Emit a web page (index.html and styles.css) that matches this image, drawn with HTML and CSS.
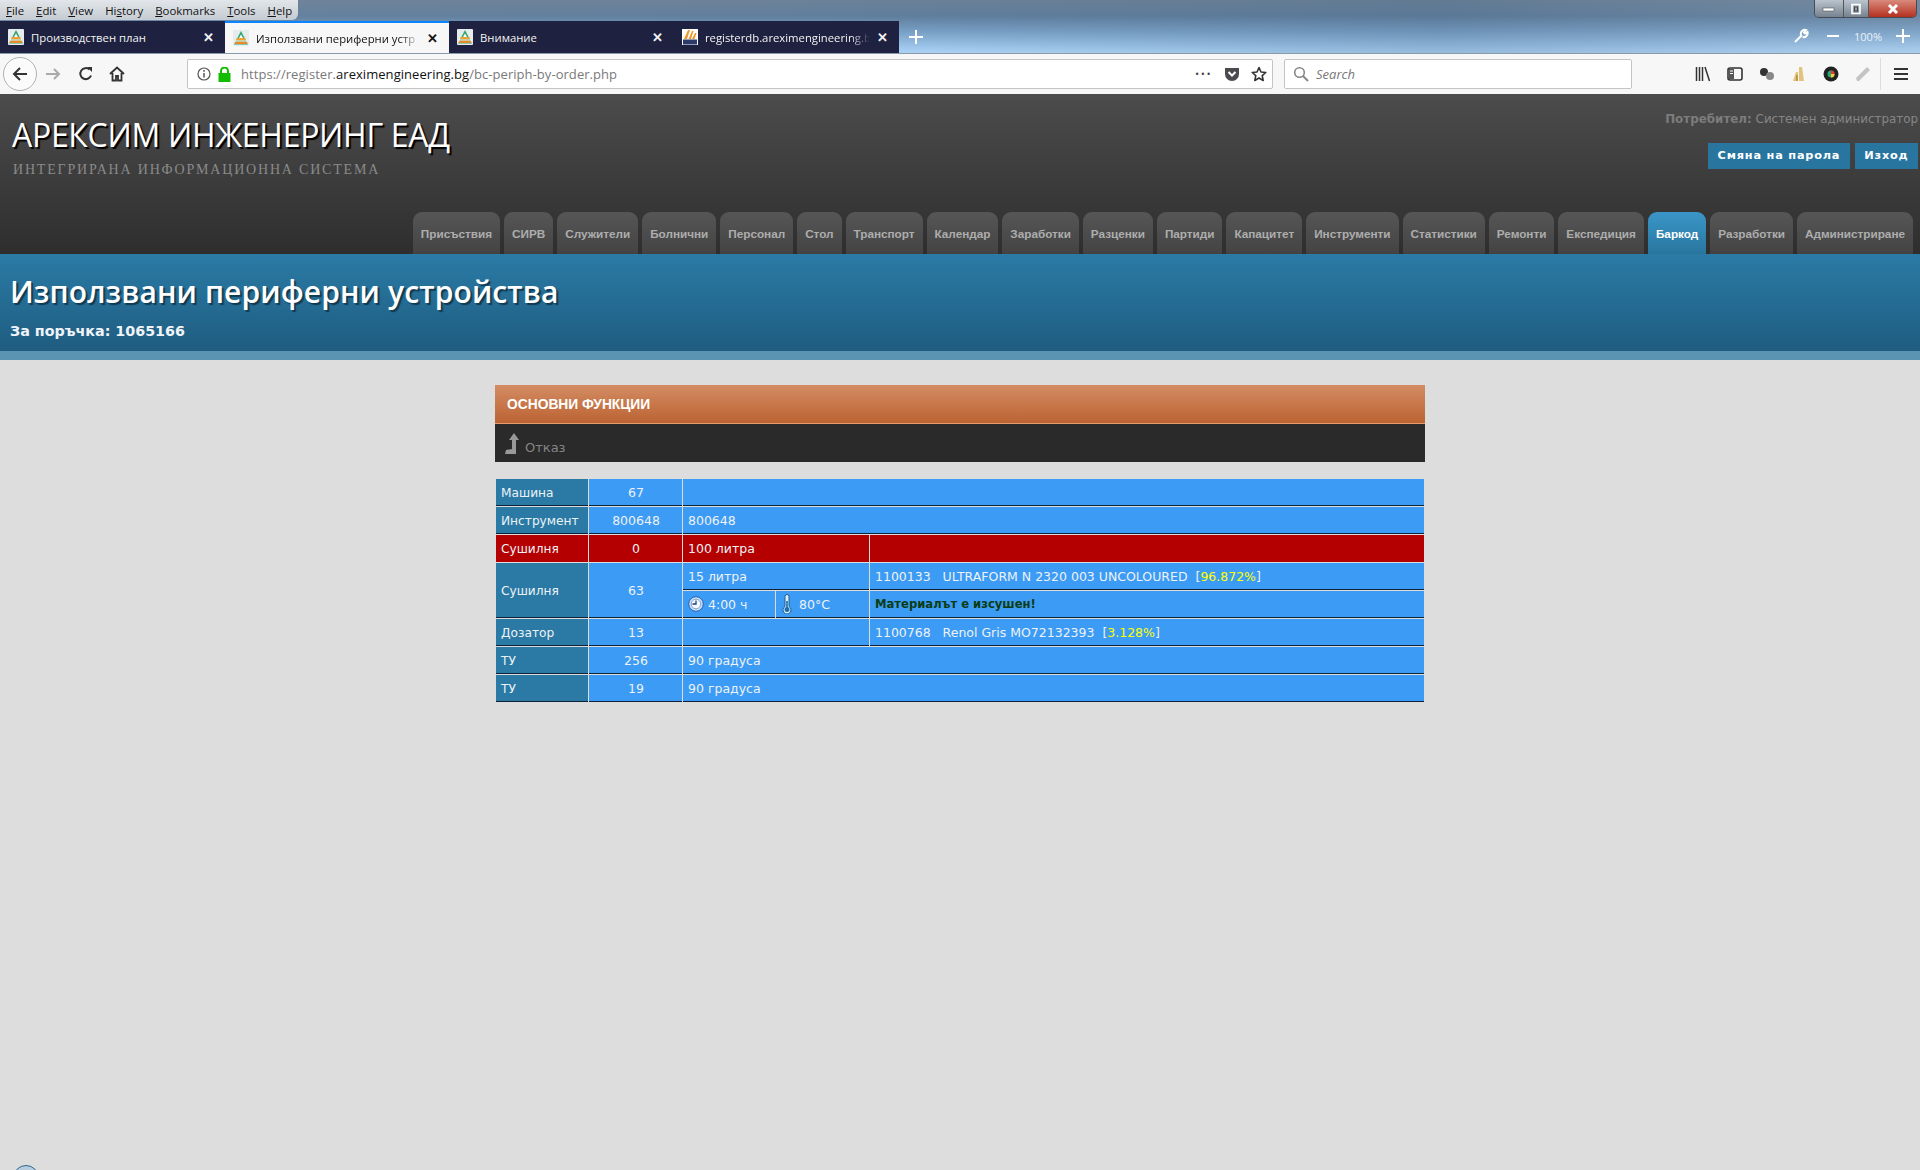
FILE: index.html
```html
<!DOCTYPE html>
<html lang="bg">
  <head>
    <meta charset="UTF-8" />
    <title>Използвани периферни устройства</title>
    <link rel="stylesheet" href="styles.css">
  </head>
  <body>
    <svg class="defs" width="0" height="0">
      <symbol id="fav" viewBox="0 0 16 16">
        <rect width="16" height="16" rx="1" fill="#e6ecee"/>
        <path d="M8 1 15 14.500H1Z" fill="#2fa56c"/>
        <path d="M8 4.500 10 8H6Z" fill="#fff"/>
        <rect x="3.500" y="8" width="9" height="2.500" fill="#f0a030"/>
        <rect x="2" y="10.500" width="12" height="1.200" fill="#fff"/>
        <rect x="2" y="11.700" width="12" height="2.300" fill="#e88a2a"/>
      </symbol>
    </svg>

    <div class="glass">
      <div class="menubar">
        <span><u>F</u>ile</span><span><u>E</u>dit</span><span><u>V</u>iew</span><span>Hi<u>s</u>tory</span><span><u>B</u>ookmarks</span><span><u>T</u>ools</span><span><u>H</u>elp</span>
      </div>
      <div class="wincontrols">
        <span class="winbtn"><svg width="14" height="8" viewBox="0 0 14 8"><rect x="1" y="3" width="11" height="3" fill="#fff" stroke="#555" stroke-width=".6"/></svg></span>
        <span class="winbtn restore"><svg width="12" height="12" viewBox="0 0 12 12"><rect x="2" y="1.500" width="8" height="9" fill="none" stroke="#fff" stroke-width="1.600"/><rect x="4.500" y="4" width="3" height="4" fill="none" stroke="#444" stroke-width="1"/></svg></span>
        <span class="winbtn close"><svg width="14" height="12" viewBox="0 0 14 12"><path d="M3 2 11 10M11 2 3 10" stroke="#fff" stroke-width="3"/></svg></span>
      </div>
      <div class="tabstrip">
        <div class="btab"><svg class="favicon"><use href="#fav"/></svg><span class="btab-label plain">Производствен план</span><span class="btab-x">✕</span></div>
        <div class="btab active"><svg class="favicon"><use href="#fav"/></svg><span class="btab-label">Използвани периферни устр</span><span class="btab-x">✕</span></div>
        <div class="btab"><svg class="favicon"><use href="#fav"/></svg><span class="btab-label plain">Внимание</span><span class="btab-x">✕</span></div>
        <div class="btab last">
          <svg class="favicon" viewBox="0 0 16 16"><rect width="16" height="16" fill="#fff"/><path d="M2 10 6 1h2L5 10ZM6.500 10 10 2h1.500L9 10ZM10 10l3-6h1.500L12.500 10Z" fill="#ee9a2a"/><rect x="1" y="10.500" width="14" height="5" fill="#2b3a6a"/></svg>
          <span class="btab-label">registerdb.areximengineering.b</span><span class="btab-x">✕</span>
        </div>
        <svg class="newtab" width="16" height="16" viewBox="0 0 16 16"><path d="M8 1v14M1 8h14" stroke="#fff" stroke-width="2"/></svg>
        <div class="zoomctl">
          <svg width="16" height="16" viewBox="0 0 16 16"><path d="M2 14 9 7M8 7a4 4 0 0 1 5-5L11 4.500l1 1L14.500 4a4 4 0 0 1-5 5" fill="none" stroke="#fff" stroke-width="2"/></svg>
          <svg class="zoom-minus" width="14" height="14" viewBox="0 0 14 14"><path d="M1 7h12" stroke="#fff" stroke-width="2"/></svg>
          <span class="zoom-val">100%</span>
          <svg width="14" height="14" viewBox="0 0 14 14"><path d="M7 0v14M0 7h14" stroke="#fff" stroke-width="2"/></svg>
        </div>
      </div>
    </div>

    <div class="toolbar">
      <span class="backbtn"><svg width="18" height="18" viewBox="0 0 18 18"><path d="M16 9H3M9 3 3 9l6 6" fill="none" stroke="#333" stroke-width="2"/></svg></span>
      <svg class="tool fwd" width="16" height="16" viewBox="0 0 16 16"><path d="M1 8h13M9 3l5 5-5 5" fill="none" stroke="#aaa" stroke-width="2"/></svg>
      <svg class="tool reload" width="16" height="16" viewBox="0 0 16 16"><path d="M13 9.500A5.500 5.500 0 1 1 11.500 3.500" fill="none" stroke="#333" stroke-width="2"/><path d="M9 1h5v5Z" fill="#333"/></svg>
      <svg class="tool home" width="16" height="16" viewBox="0 0 16 16"><path d="M1 8 8 1.500 15 8M3.500 7v7.500h3.500V10h2v4.500h3.500V7" fill="none" stroke="#333" stroke-width="1.800"/></svg>

      <div class="urlbar">
        <svg width="14" height="14" viewBox="0 0 14 14"><circle cx="7" cy="7" r="6" fill="none" stroke="#555" stroke-width="1.200"/><path d="M7 6v4.500M7 3v1.800" stroke="#555" stroke-width="1.500"/></svg>
        <svg class="lock" width="13" height="15" viewBox="0 0 13 15"><rect x="0.500" y="6" width="12" height="9" fill="#12bc00"/><path d="M3 6V4a3.500 3.500 0 0 1 7 0v2" fill="none" stroke="#12bc00" stroke-width="2"/></svg>
        <span class="url">https://register.<b>areximengineering.bg</b>/bc-periph-by-order.php</span>
        <span class="url-dots">•••</span>
        <svg class="pocket" width="16" height="15" viewBox="0 0 16 15"><path d="M1 1h14v6a7 7 0 0 1-14 0Z" fill="#4a4a4f"/><path d="M4.500 5 8 8.500 11.500 5" fill="none" stroke="#fff" stroke-width="2"/></svg>
        <svg class="star" width="16" height="16" viewBox="0 0 16 16"><path d="M8 1.500 10 6l4.800.5-3.600 3.200 1 4.800L8 12l-4.200 2.500 1-4.800L1.200 6.500 6 6Z" fill="none" stroke="#333" stroke-width="1.600" stroke-linejoin="round"/></svg>
      </div>

      <div class="searchbar">
        <svg width="16" height="16" viewBox="0 0 16 16"><circle cx="6.500" cy="6.500" r="4.800" fill="none" stroke="#888" stroke-width="1.600"/><path d="m10 10 5 5" stroke="#888" stroke-width="2"/></svg>
        <span>Search</span>
      </div>

      <div class="addons">
        <svg width="16" height="16" viewBox="0 0 16 16"><path d="M1.500 1v14M4.500 1v14M7.500 1v14M10 1l4.500 14" stroke="#333" stroke-width="1.500" fill="none"/></svg>
        <svg width="16" height="16" viewBox="0 0 16 16"><rect x="1" y="2" width="14" height="12" rx="2" fill="none" stroke="#333" stroke-width="1.600"/><rect x="2" y="3" width="5" height="10" fill="#555"/><path d="M3 5h3M3 7.500h3" stroke="#fff"/></svg>
        <svg width="16" height="16" viewBox="0 0 16 16"><circle cx="5" cy="6" r="4" fill="#333"/><circle cx="11" cy="10" r="4" fill="#888"/></svg>
        <svg width="16" height="16" viewBox="0 0 16 16"><path d="M2 15 5 6h2v9ZM8 15V1h3l2 14Z" fill="#e3c27a"/><path d="M5 15V9h2v6Z" fill="#b99a50"/></svg>
        <svg width="16" height="16" viewBox="0 0 16 16"><circle cx="8" cy="8" r="7.500" fill="#222"/><circle cx="8" cy="8" r="3.500" fill="#2a7"/><path d="M8 4.500a3.500 3.500 0 0 1 3.500 3.500H8Z" fill="#e33"/><path d="M8 8h3.500A3.500 3.500 0 0 1 8 11.500Z" fill="#fc3"/></svg>
        <svg width="16" height="16" viewBox="0 0 16 16"><path d="M2 15 1 12 12 1l3 3L4 15Z" fill="#c4c4c4"/></svg>
      </div>
      <span class="tool-sep"></span>
      <svg class="hamburger" width="14" height="12" viewBox="0 0 14 12"><path d="M0 1h14M0 6h14M0 11h14" stroke="#333" stroke-width="2"/></svg>
    </div>

    <header class="site-header">
      <div class="header-top">
        <div class="brand">
          <h1>АРЕКСИМ ИНЖЕНЕРИНГ ЕАД</h1>
          <p>ИНТЕГРИРАНА ИНФОРМАЦИОННА СИСТЕМА</p>
        </div>
        <div class="userbox">
          <p class="username"><strong>Потребител:</strong> Системен администратор</p>
          <div class="userlinks"><a>Смяна на парола</a><a>Изход</a></div>
        </div>
      </div>
      <nav class="mainnav">
        <a>Присъствия</a><a>СИРВ</a><a>Служители</a><a>Болнични</a><a>Персонал</a><a>Стол</a><a>Транспорт</a><a>Календар</a><a>Заработки</a><a>Разценки</a><a>Партиди</a><a>Капацитет</a><a>Инструменти</a><a>Статистики</a><a>Ремонти</a><a>Експедиция</a><a class="current">Баркод</a><a>Разработки</a><a>Администриране</a>
      </nav>
    </header>

    <section class="pagetitle">
      <h2>Използвани периферни устройства</h2>
      <p>За поръчка: 1065166</p>
    </section>

    <main class="content">
      <div class="panel-title">ОСНОВНИ ФУНКЦИИ</div>
      <div class="panel-body">
        <svg width="16" height="22" viewBox="0 0 16 22"><path d="M9 0 14 7H11V21H0L1 17 7 16V7H4Z" fill="#999"/></svg>
        <span>Отказ</span>
      </div>

      <table class="periph">
        <colgroup><col class="c1"><col class="c2"><col class="c3"><col class="c4"><col></colgroup>
        <tr><th>Машина</th><td class="num">67</td><td colspan="3"></td></tr>
        <tr><th>Инструмент</th><td class="num">800648</td><td colspan="3">800648</td></tr>
        <tr class="alarm"><th>Сушилня</th><td class="num">0</td><td colspan="2">100 литра</td><td></td></tr>
        <tr><th rowspan="2">Сушилня</th><td class="num" rowspan="2">63</td><td colspan="2">15 литра</td><td>1100133 &nbsp; ULTRAFORM N 2320 003 UNCOLOURED &nbsp;[<span class="pct">96.872%</span>]</td></tr>
        <tr>
          <td><svg class="cell-icon" width="16" height="16" viewBox="0 0 16 16"><circle cx="8" cy="8" r="7.300" fill="#c9dcf7" stroke="#2b5fa8"/><circle cx="8" cy="8" r="4.800" fill="#f4f8fe" stroke="#7fa5da"/><path d="M8 4.500V8H4.500" fill="none" stroke="#1d3f7a" stroke-width="1.300"/></svg>4:00 ч</td>
          <td><svg class="cell-icon thermo" width="10" height="20" viewBox="0 0 10 20"><path d="M3 2.500a2 2 0 0 1 4 0v10a4 4 0 1 1-4 0Z" fill="#dcefff" stroke="#1d5f8f"/><circle cx="5" cy="15.500" r="2.500" fill="#1d6fb0"/><rect x="4.200" y="7" width="1.600" height="8" fill="#1d6fb0"/></svg>80°C</td>
          <td class="dried">Материалът е изсушен!</td>
        </tr>
        <tr><th>Дозатор</th><td class="num">13</td><td colspan="2"></td><td>1100768 &nbsp; Renol Gris MO72132393 &nbsp;[<span class="pct">3.128%</span>]</td></tr>
        <tr><th>ТУ</th><td class="num">256</td><td colspan="3">90 градуса</td></tr>
        <tr><th>ТУ</th><td class="num">19</td><td colspan="3">90 градуса</td></tr>
      </table>
    </main>

    <span class="corner-badge"></span>
  </body>
</html>
```

FILE: styles.css
```css
html, body {
  margin: 0;
  padding: 0;
  height: 1170px;
  overflow: hidden;
}

body {
  position: relative;
  background-color: #dddddd;
  font-family: "DejaVu Sans", sans-serif;
}

.defs {
  position: absolute;
}

/* browser chrome */
.glass {
  position: relative;
  height: 53px;
  background:
    linear-gradient(90deg, rgba(120, 140, 160, 0.25), rgba(90, 120, 160, 0) 40%, rgba(70, 100, 130, 0.25) 75%, rgba(150, 170, 190, 0.2)),
    linear-gradient(180deg, #6d8298 0%, #617f9e 30%, #7ba3c9 60%, #a7d0f4 92%, #b3d8f8 100%);
}

.menubar {
  display: flex;
  gap: 12px;
  width: 292px;
  height: 20px;
  padding-left: 6px;
  align-items: center;
  background: linear-gradient(180deg, #e2e6ea, #c4cbd2);
  border-radius: 0 0 6px 0;
  font-family: "Open Sans", sans-serif;
  font-size: 11.4px;
  color: #111;
}

.wincontrols {
  position: absolute;
  top: 0;
  right: 3px;
  display: flex;
  height: 17px;
  border: 1px solid #444c55;
  border-top: none;
  border-radius: 0 0 5px 5px;
  overflow: hidden;
}

.winbtn {
  display: flex;
  align-items: center;
  justify-content: center;
  width: 28px;
  background: linear-gradient(180deg, #b9c4cf, #76828e);
  border-right: 1px solid #555;
}

.winbtn.restore {
  width: 24px;
}

.winbtn.close {
  width: 47px;
  border-right: none;
  background: linear-gradient(180deg, #d98a7c, #b4301f);
}

.tabstrip {
  display: flex;
  align-items: stretch;
  height: 32px;
  margin-top: 1px;
}

.btab {
  display: flex;
  align-items: center;
  gap: 7px;
  box-sizing: border-box;
  width: 225px;
  padding: 0 11px 0 8px;
  background-color: #1e2240;
  color: #f2f2f2;
  font-family: "Open Sans", sans-serif;
  font-size: 11.3px;
}

.btab.active {
  width: 224px;
  background-color: #f7f7f8;
  color: #111;
  border-top: 2px solid #0a84ff;
}

.btab-label {
  flex: 1;
  min-width: 0;
  white-space: nowrap;
  -webkit-mask-image: linear-gradient(90deg, #000 88%, transparent);
  mask-image: linear-gradient(90deg, #000 88%, transparent);
}

.btab-label.plain {
  -webkit-mask-image: none;
  mask-image: none;
}

.btab-x {
  font-size: 13px;
  font-weight: bold;
}

.favicon {
  flex: none;
  width: 16px;
  height: 16px;
}

.newtab {
  align-self: center;
  margin-left: 9px;
}

.zoomctl {
  display: flex;
  align-items: center;
  gap: 8px;
  margin-left: auto;
  padding-right: 10px;
  padding-bottom: 2px;
  color: #e8f2fb;
  font-family: "Open Sans", sans-serif;
  font-size: 11px;
}

.zoom-minus {
  margin-left: 9px;
}

.zoom-val {
  padding: 0 6px;
}

.toolbar {
  display: flex;
  align-items: center;
  box-sizing: border-box;
  height: 41px;
  background-color: #f7f7f8;
  border-top: 1px solid #8a9aac;
}

.backbtn {
  display: flex;
  align-items: center;
  justify-content: center;
  flex: none;
  width: 32px;
  height: 32px;
  margin-left: 3px;
  border: 1px solid #b1b1b3;
  border-radius: 50%;
  background-color: #fbfbfb;
}

.tool {
  flex: none;
}

.fwd {
  margin-left: 8px;
}

.reload {
  margin-left: 17px;
}

.home {
  margin-left: 15px;
}

.urlbar {
  display: flex;
  align-items: center;
  box-sizing: border-box;
  width: 1086px;
  height: 30px;
  margin-left: 62px;
  padding: 0 5px 0 9px;
  background-color: #fff;
  border: 1px solid #c4c4c4;
  border-radius: 2px;
}

.lock {
  margin-left: 7px;
}

.url {
  margin-left: 10px;
  font-family: "Open Sans", sans-serif;
  font-size: 13px;
  letter-spacing: 0.05px;
  color: #7a7a7a;
}

.url b {
  font-weight: 400;
  color: #111;
}

.url-dots {
  margin-left: auto;
  font-size: 8px;
  letter-spacing: 1px;
  color: #444;
}

.pocket {
  margin-left: 12px;
}

.star {
  margin-left: 11px;
}

.searchbar {
  display: flex;
  align-items: center;
  gap: 7px;
  box-sizing: border-box;
  width: 348px;
  height: 30px;
  margin-left: 11px;
  padding-left: 8px;
  background-color: #fff;
  border: 1px solid #c4c4c4;
  border-radius: 2px;
  font-family: "Open Sans", sans-serif;
  font-size: 13px;
  font-style: italic;
  color: #777;
}

.addons {
  display: flex;
  gap: 16px;
  margin-left: 63px;
}

.tool-sep {
  width: 1px;
  height: 32px;
  margin-left: 9px;
  background-color: #ddd;
}

.hamburger {
  margin-left: 13px;
}

/* site header */
.site-header {
  box-sizing: border-box;
  height: 160px;
  background: linear-gradient(180deg, #4c4c4c, #2e2e2e);
  display: flex;
  flex-direction: column;
  justify-content: space-between;
}

.header-top {
  display: flex;
  justify-content: space-between;
}

.brand {
  padding: 21px 0 0 12px;
}

.brand h1 {
  margin: 0;
  font-family: "Open Sans", sans-serif;
  font-size: 32px;
  font-weight: 500;
  line-height: 40px;
  letter-spacing: -0.3px;
  color: #fff;
  text-shadow: 2px 2px 1px #000;
}

.brand p {
  margin: 6px 0 0 1px;
  font-family: "Liberation Serif", serif;
  font-size: 14px;
  line-height: 18px;
  letter-spacing: 1.8px;
  color: #8a8a8a;
}

.userbox {
  display: flex;
  flex-direction: column;
  align-items: flex-end;
  padding: 17px 2px 0 0;
}

.username {
  margin: 0;
  font-size: 11.9px;
  line-height: 16px;
  color: #868686;
}

.username strong {
  color: #7c7c7c;
}

.userlinks {
  display: flex;
  gap: 5px;
  margin-top: 16px;
}

.userlinks a {
  padding: 0 9.500px;
  background-color: #28769f;
  font-size: 11.300px;
  font-weight: bold;
  line-height: 26px;
  letter-spacing: 0.8px;
  color: #fff;
}

.mainnav {
  display: flex;
  justify-content: flex-end;
  gap: 4px;
  padding-right: 7px;
}

.mainnav a {
  height: 42px;
  padding: 0 8px;
  border-radius: 9px 9px 0 0;
  background: linear-gradient(180deg, #565656, #434343);
  font-family: "Liberation Sans", sans-serif;
  font-size: 11.750px;
  font-weight: bold;
  line-height: 44px;
  letter-spacing: -0.015px;
  color: #adadad;
}

.mainnav a.current {
  background: linear-gradient(180deg, #3a96c8, #28769f);
  color: #fff;
}

/* page title band */
.pagetitle {
  box-sizing: border-box;
  height: 106px;
  padding: 18px 0 0 10px;
  background: linear-gradient(180deg, #2a7ba6, #1f5c80);
  border-bottom: 9px solid #5b93b2;
}

.pagetitle h2 {
  margin: 0;
  font-family: "Open Sans", sans-serif;
  font-size: 30px;
  font-weight: 600;
  line-height: 40px;
  letter-spacing: 0.12px;
  color: #fff;
  text-shadow: 2px 2px 1px #123a52;
}

.pagetitle p {
  margin: 10px 0 0 0;
  font-size: 14.300px;
  font-weight: bold;
  line-height: 18px;
  color: #f0f4f8;
}

/* content panel */
.content {
  width: 930px;
  margin: 25px auto 0;
}

.panel-title {
  box-sizing: border-box;
  height: 39px;
  padding-left: 12px;
  background: linear-gradient(180deg, #d48c63, #bb6333);
  border-bottom: 1px solid #e39c6e;
  font-family: "Liberation Sans", sans-serif;
  font-size: 13.800px;
  font-weight: bold;
  line-height: 39px;
  color: #fff;
}

.panel-body {
  display: flex;
  align-items: flex-end;
  gap: 4px;
  box-sizing: border-box;
  height: 38px;
  padding: 0 0 7px 10px;
  background-color: #2a2a2a;
  font-size: 13px;
  color: #858585;
}

.periph {
  width: 930px;
  margin-top: 16px;
  table-layout: fixed;
  border-collapse: separate;
  border-spacing: 1px;
  font-size: 12.500px;
  color: #edf2f7;
}

.c1 {
  width: 92px;
}

.c2 {
  width: 93px;
}

.c3 {
  width: 92px;
}

.c4 {
  width: 93px;
}

.periph th,
.periph td {
  box-sizing: border-box;
  height: 27px;
  padding: 0 5px;
  border-bottom: 1px solid #0d2238;
  background-color: #3c9bf4;
  font-weight: normal;
  text-align: left;
  white-space: nowrap;
}

.periph th {
  padding-top: 1px;
  background-color: #2a7aa5;
  font-size: 12.200px;
}

.periph td.num {
  padding-left: 6px;
  text-align: center;
}

.periph .alarm th,
.periph .alarm td {
  background-color: #b40000;
  border-bottom-color: #b40000;
}

.periph td.dried {
  font-size: 11.600px;
  font-weight: bold;
  color: #0b3d14;
}

.pct {
  color: #ffff00;
}

.cell-icon {
  margin-right: 4px;
  vertical-align: -3px;
}

.thermo {
  margin: 0 7px 0 1px;
  vertical-align: -5px;
}

.corner-badge {
  position: absolute;
  left: 13px;
  top: 1165px;
  box-sizing: border-box;
  width: 26px;
  height: 26px;
  border: 1px solid #2f6690;
  border-radius: 50%;
  background-color: #b7cddd;
}
```
